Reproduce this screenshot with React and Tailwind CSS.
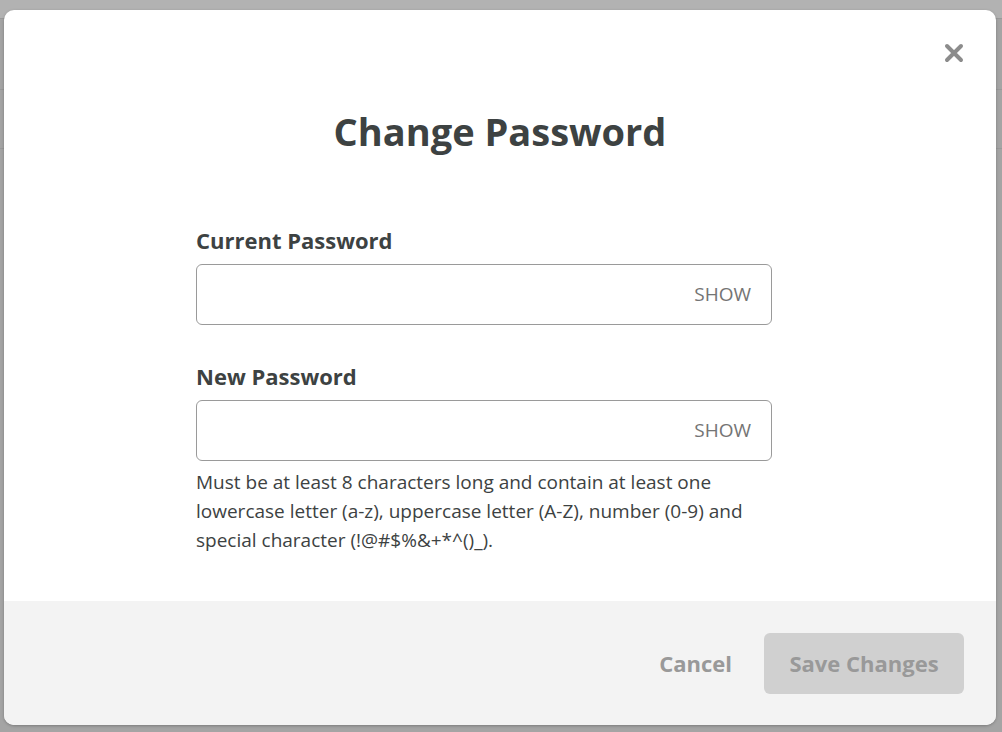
import React, { useState } from 'react';

function PasswordField({ id, label, children }) {
  const [visible, setVisible] = useState(false);
  return (
    <div>
      <label htmlFor={id} className="block text-[22px] leading-[28px] font-bold text-[#3d4242]">{label}</label>
      <div className="mt-[10px] flex h-[61px] items-center rounded-md border border-[#9a9a9a] bg-white pl-4 pr-5">
        <input
          id={id}
          type={visible ? 'text' : 'password'}
          className="h-full flex-1 bg-transparent text-[18px] text-[#3d4242] outline-none"
        />
        <button
          type="button"
          onClick={() => setVisible(v => !v)}
          className="text-[19px] uppercase text-[#747474]"
        >
          Show
        </button>
      </div>
      {children}
    </div>
  );
}

export default function App() {
  return (
    <div className="relative h-[732px] w-[1002px] overflow-hidden bg-[#a4a4a4] font-['Open_Sans',sans-serif]">
      {/* page behind the backdrop */}
      <div className="h-[19px] border-b border-[#999] bg-[#b2b2b2]" />
      <div className="mt-[70px] h-[60px] border-y border-[#999]" />

      <div className="absolute left-[4px] top-[10px] flex h-[715px] w-[992px] flex-col overflow-hidden rounded-[10px] bg-white shadow-[0_1px_3px_rgba(0,0,0,0.25)]">
        <button type="button" aria-label="Close" className="absolute right-[32px] top-[33px] text-[#8c8c8c]">
          <svg width="20" height="20" viewBox="0 0 20 20" fill="none" stroke="currentColor" strokeWidth="4" strokeLinecap="round">
            <path d="M3 3l14 14M17 3L3 17" />
          </svg>
        </button>

        <div className="flex-1">
          <h1 className="mt-[97px] text-center text-[38px] leading-[48px] font-bold text-[#3d4242]">Change Password</h1>

          <div className="ml-[192px] mt-[71px] w-[576px]">
            <PasswordField id="current" label="Current Password" />
            <div className="mt-[37px]">
              <PasswordField id="new" label="New Password">
                <p className="mt-[7px] text-[19px] leading-[29px] text-[#3d4242]">
                  Must be at least 8 characters long and contain at least one lowercase letter (a-z), uppercase letter (A-Z), number (0-9) and special character (!@#$%&+*^()_).
                </p>
              </PasswordField>
            </div>
          </div>
        </div>

        <div className="flex h-[124px] items-start justify-end gap-8 bg-[#f3f3f3] pr-8 pt-8">
          <button type="button" className="h-[61px] text-[22px] font-bold text-[#999]">Cancel</button>
          <button type="button" disabled className="h-[61px] w-[200px] rounded-md bg-[#d0d0d0] text-[22px] font-bold text-[#999]">Save Changes</button>
        </div>
      </div>
    </div>
  );
}
